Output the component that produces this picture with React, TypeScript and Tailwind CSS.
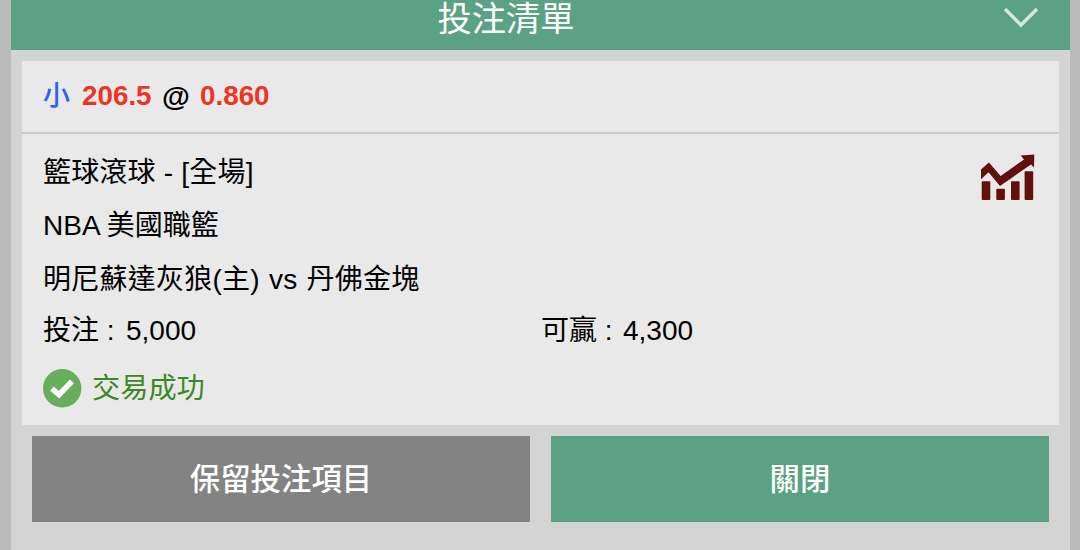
import React from "react";

const ChevronDown = () => (
  <svg width="36" height="22" viewBox="0 0 36 22" fill="none">
    <path d="M2 2 L18 18 L34 2" stroke="#d3e7de" strokeWidth="3.4" />
  </svg>
);

const TrendIcon = () => (
  <svg width="56" height="48" viewBox="0 0 56 48" fill="#61100c">
    <path d="M1 15.5 L9 8.4 L20.6 22 L44 5.4 L40.7 1.4 L54.3 0.4 L54 13.6 L51 10.4 L20 32 L8.5 18.2 L1 25.2 Z" />
    <rect x="1.7" y="27.3" width="8.6" height="18.8" rx="1" />
    <rect x="16.3" y="34.8" width="8.6" height="11.3" rx="1" />
    <rect x="31" y="27.3" width="8.6" height="18.8" rx="1" />
    <rect x="44.6" y="17.3" width="8.6" height="28.8" rx="1" />
  </svg>
);

const SuccessIcon = () => (
  <svg width="39" height="39" viewBox="0 0 39 39" fill="none">
    <circle cx="19.2" cy="19.3" r="19.2" fill="#67ae5c" />
    <path d="M9 19.6 L16 25.6 L29 12.4" stroke="#fff" strokeWidth="5.6" />
  </svg>
);

export default function App() {
  return (
    <div className="h-[550px] w-[1080px] overflow-hidden bg-[#bababa] pr-2.5 pl-[11px] font-['Liberation_Sans','Noto_Sans_CJK_TC',sans-serif] text-[28px] text-black">
      <div className="flex h-full flex-col bg-[#d4d4d4]">
        {/* header */}
        <div className="flex h-[50px] shrink-0 items-start bg-[#5ba284] text-white">
          <div className="w-24" />
          <h1 className="flex-1 pr-[69px] text-center text-[34.2px] leading-[38px] font-normal whitespace-nowrap">
            投注清單
          </h1>
          <div className="flex w-24 justify-end pt-[7px] pr-[31px]">
            <ChevronDown />
          </div>
        </div>

        {/* bet card */}
        <div className="mx-[11px] mt-[11px] flex h-[364px] shrink-0 flex-col bg-[#e9e9e9]">
          <div className="flex h-[73px] shrink-0 items-center border-b-2 border-[#cbcbcb] pb-px pl-[21px] font-bold whitespace-pre">
            <span className="w-[39px] text-[27px] font-medium text-[#2c62f0]">小</span>
            <span className="w-[80px] text-[27.8px] text-[#ee3425]">206.5</span>
            <span className="w-[38px] text-[28.5px]">@</span>
            <span className="text-[27.8px] text-[#ee3425]">0.860</span>
          </div>
          <div className="flex justify-between pr-[23px] pl-[21px]">
            <div className="pt-3 leading-[53.4px] whitespace-nowrap">
              <p className="tracking-[0.2px]">籃球滾球 - [全場]</p>
              <p>NBA 美國職籃</p>
              <p className="tracking-[0.25px] [word-spacing:1px]">
                明尼蘇達灰狼(主) vs 丹佛金塊
              </p>
            </div>
            <div className="pt-5">
              <TrendIcon />
            </div>
          </div>
          <div className="flex pl-[21px] leading-[49px]">
            <p className="flex w-[498px]">
              <span className="w-[83px]">投注 :</span>
              <span>5,000</span>
            </p>
            <p className="flex">
              <span className="w-[82px]">可贏 :</span>
              <span>4,300</span>
            </p>
          </div>
          <div className="flex items-center gap-2.5 pt-3 pl-[21px] text-[#398a22]">
            <SuccessIcon />
            <span className="text-[28.2px]">交易成功</span>
          </div>
        </div>

        {/* actions */}
        <div className="mt-[11px] flex gap-[21px] pr-[21px] pl-[21px] text-[30.4px] font-medium text-white">
          <button className="h-[86px] flex-1 bg-[#838383] pt-0.5">保留投注項目</button>
          <button className="h-[86px] flex-1 bg-[#5ba284] pt-0.5">關閉</button>
        </div>
      </div>
    </div>
  );
}
